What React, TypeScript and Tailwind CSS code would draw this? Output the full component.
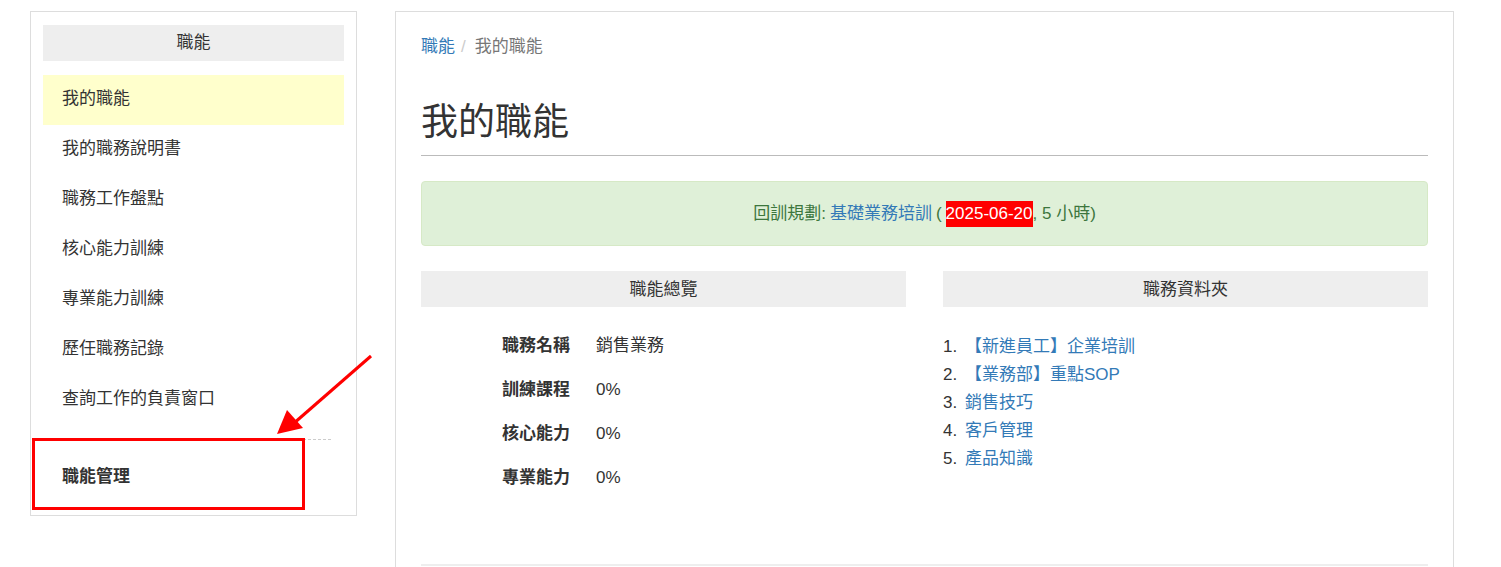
import React from "react";

const font = { fontFamily: '"Liberation Sans", "Noto Sans CJK TC", sans-serif' };

const menuItems = [
  "我的職能",
  "我的職務說明書",
  "職務工作盤點",
  "核心能力訓練",
  "專業能力訓練",
  "歷任職務記錄",
  "查詢工作的負責窗口",
];

const summary = [
  { label: "職務名稱", value: "銷售業務" },
  { label: "訓練課程", value: "0%" },
  { label: "核心能力", value: "0%" },
  { label: "專業能力", value: "0%" },
];

const folders = ["【新進員工】企業培訓", "【業務部】重點SOP", "銷售技巧", "客戶管理", "產品知識"];

const Sidebar: React.FC = () => (
  <aside className="relative w-[327px] shrink-0 self-start border border-[#ddd] bg-white px-3 pt-[13px] pb-px">
    <div className="flex h-9 items-center justify-center bg-[#eee] text-[17px] text-[#333]">職能</div>
    <ul className="mt-[14px]">
      {menuItems.map((item, i) => (
        <li
          key={item}
          className={`flex h-[50px] items-center px-[19px] pb-[2px] text-[17px] text-[#333] ${i === 0 ? "bg-[#ffffcc]" : ""}`}
        >
          {item}
        </li>
      ))}
    </ul>
    <div className="mr-[13px] mt-[14px] border-t border-dashed border-[#ccc]" />
    <div className="flex h-[74px] items-center px-[19px] text-[17px] font-bold text-[#333]">職能管理</div>

    {/* annotation box + arrow */}
    <div className="pointer-events-none absolute left-[1px] top-[426px] h-[72px] w-[273px] border-[3px] border-[#f00]" />
    <svg
      className="pointer-events-none absolute left-[240px] top-[340px]"
      width="110"
      height="96"
      viewBox="0 0 110 96"
    >
      <line x1="100" y1="4" x2="22" y2="72" stroke="#f00" strokeWidth="3" />
      <polygon points="6,82 16,58 32,76" fill="#f00" />
    </svg>
  </aside>
);

const Main: React.FC = () => (
  <main className="h-[600px] w-[1059px] shrink-0 border border-[#ddd] bg-white px-[25px] pt-[23px]">
    <nav className="flex items-center text-[17px] leading-[24px]">
      <span className="text-[#337ab7]">職能</span>
      <span className="px-[6px] text-[#ccc]">/</span>
      <span className="ml-[3px] text-[#777]">我的職能</span>
    </nav>
    <h1 className="mt-[42px] border-b border-[#bbb] pb-[10px] text-[37px] leading-[1.2] text-[#333]">我的職能</h1>
    <div className="mt-[25px] flex h-[65px] items-center justify-center rounded border border-[#d6e9c6] bg-[#dff0d8] text-[17px] text-[#3c763d]">
      <span>回訓規劃: </span>
      <span className="ml-1 text-[#337ab7]">基礎業務培訓</span>
      <span className="ml-1">(</span>
      <span className="ml-1 bg-[#f00] text-white">2025-06-20</span>
      <span>, 5 小時)</span>
    </div>
    <div className="mt-[25px] grid grid-cols-2 gap-[37px]">
      <section>
        <div className="flex h-9 items-center justify-center bg-[#eee] text-[17px] text-[#333]">職能總覽</div>
        <div className="mt-[16px] pl-[81px]">
          {summary.map((row) => (
            <div key={row.label} className="flex h-[44px] items-center text-[17px] text-[#333]">
              <span className="w-[94px] font-bold">{row.label}</span>
              <span>{row.value}</span>
            </div>
          ))}
        </div>
      </section>
      <section>
        <div className="flex h-9 items-center justify-center bg-[#eee] text-[17px] text-[#333]">職務資料夾</div>
        <ol className="mt-[25px] text-[17px] text-[#333]">
          {folders.map((f, i) => (
            <li key={f} className="flex h-[28px] items-center">
              <span className="w-[22px]">{i + 1}.</span>
              <span className="text-[#337ab7]">{f}</span>
            </li>
          ))}
        </ol>
      </section>
    </div>
    <div className="mt-[65px] border-t-2 border-[#eee]" />
  </main>
);

export default function App() {
  return (
    <div className="h-[567px] overflow-hidden bg-white" style={font}>
      <div className="flex gap-[38px] pl-[30px] pt-[11px]">
        <Sidebar />
        <Main />
      </div>
    </div>
  );
}
